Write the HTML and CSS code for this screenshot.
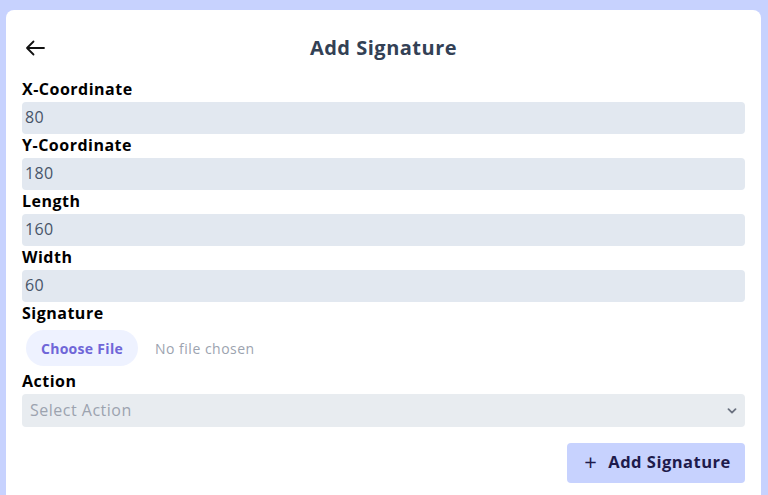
FILE: index.html
```html
<!DOCTYPE html>
<html lang="en">
<head>
<meta charset="utf-8">
<title>Add Signature</title>
<link rel="stylesheet" href="styles.css">
</head>
<body>
<div class="page">
  <div class="card">
    <div class="header">
      <button class="back" aria-label="Back">
        <svg width="20" height="16" viewBox="0 0 20 16" fill="none" stroke="#111" stroke-width="1.8" stroke-linecap="round" stroke-linejoin="round"><path d="M19 8H2M8.5 1.5L2 8l6.5 6.5"/></svg>
      </button>
      <h1 class="title">Add Signature</h1>
    </div>
    <form class="form">
      <label class="label">X-Coordinate</label>
      <div class="input">80</div>
      <label class="label">Y-Coordinate</label>
      <div class="input">180</div>
      <label class="label">Length</label>
      <div class="input">160</div>
      <label class="label">Width</label>
      <div class="input">60</div>
      <label class="label">Signature</label>
      <div class="file">
        <span class="file-btn">Choose File</span>
        <span class="file-name">No file chosen</span>
      </div>
      <label class="label">Action</label>
      <div class="select">
        <span>Select Action</span>
        <svg width="10" height="6" viewBox="0 0 10 6" fill="none" stroke="#6b7280" stroke-width="1.8" stroke-linecap="round" stroke-linejoin="round"><path d="M1.5 1.2L5 4.6l3.5-3.4"/></svg>
      </div>
      <div class="actions">
        <button type="button" class="submit"><span class="plus">+</span>Add Signature</button>
      </div>
    </form>
  </div>
</div>
</body>
</html>
```
FILE: styles.css
```css
* { box-sizing: border-box; }
html, body { margin: 0; padding: 0; }
body {
  background: #c7d2fe;
  font-family: "Open Sans", "Noto Sans", sans-serif;
  height: 495px;
  overflow: hidden;
}
.page {
  padding: 10px 7px 0 6px;
}
.card {
  background: #fff;
  border-radius: 8px;
  padding: 20px 16px 30px 16px;
  min-height: 500px;
}
.header {
  position: relative;
  height: 36px;
  display: flex;
  align-items: center;
  justify-content: center;
  margin-bottom: 12px;
}
.back {
  position: absolute;
  left: 3px;
  top: 10px;
  background: none;
  border: 0;
  padding: 0;
  display: flex;
}
.title {
  margin: 0;
  font-size: 20px;
  font-weight: 700;
  color: #334155;
  line-height: 36px;
  letter-spacing: 0.5px;
}
.form {
  display: flex;
  flex-direction: column;
}
.label {
  font-size: 16px;
  font-weight: 700;
  color: #000;
  line-height: 22px;
  height: 24px;
  letter-spacing: 0.5px;
}
.input {
  height: 32px;
  background: #e2e8f0;
  border-radius: 4px;
  padding: 0 3px;
  font-size: 16px;
  line-height: 31px;
  color: #475569;
  letter-spacing: 0.3px;
}
.file {
  height: 44px;
  padding: 4px;
  display: flex;
  align-items: center;
}
.file-btn {
  height: 36px;
  width: 112px;
  border-radius: 18px;
  background: #eef2ff;
  color: #6f66d8;
  font-size: 14px;
  font-weight: 700;
  letter-spacing: 0.3px;
  display: flex;
  align-items: center;
  justify-content: center;
}
.file-name {
  margin-left: 17px;
  font-size: 14px;
  color: #9ca3af;
  letter-spacing: 0.5px;
}
.select {
  height: 33px;
  background: #e8ecf0;
  border-radius: 4px;
  padding: 0 8px 1px 8px;
  font-size: 16px;
  color: #9ca3af;
  letter-spacing: 0.5px;
  display: flex;
  align-items: center;
  justify-content: space-between;
}
.select svg { margin-top: 1px; }
.actions {
  display: flex;
  justify-content: flex-end;
  margin-top: 16px;
}
.submit {
  height: 40px;
  width: 178px;
  background: #c7d2fe;
  border: 0;
  border-radius: 4px;
  color: #1e1b4b;
  font-family: inherit;
  font-size: 16.5px;
  font-weight: 700;
  letter-spacing: 0.5px;
  padding: 0 0 3px 0;
  display: flex;
  align-items: center;
  justify-content: center;
}
.plus {
  font-size: 22px;
  font-weight: 400;
  margin-right: 11px;
  margin-left: 3px;
  line-height: 1;
  margin-top: -2px;
}
```
